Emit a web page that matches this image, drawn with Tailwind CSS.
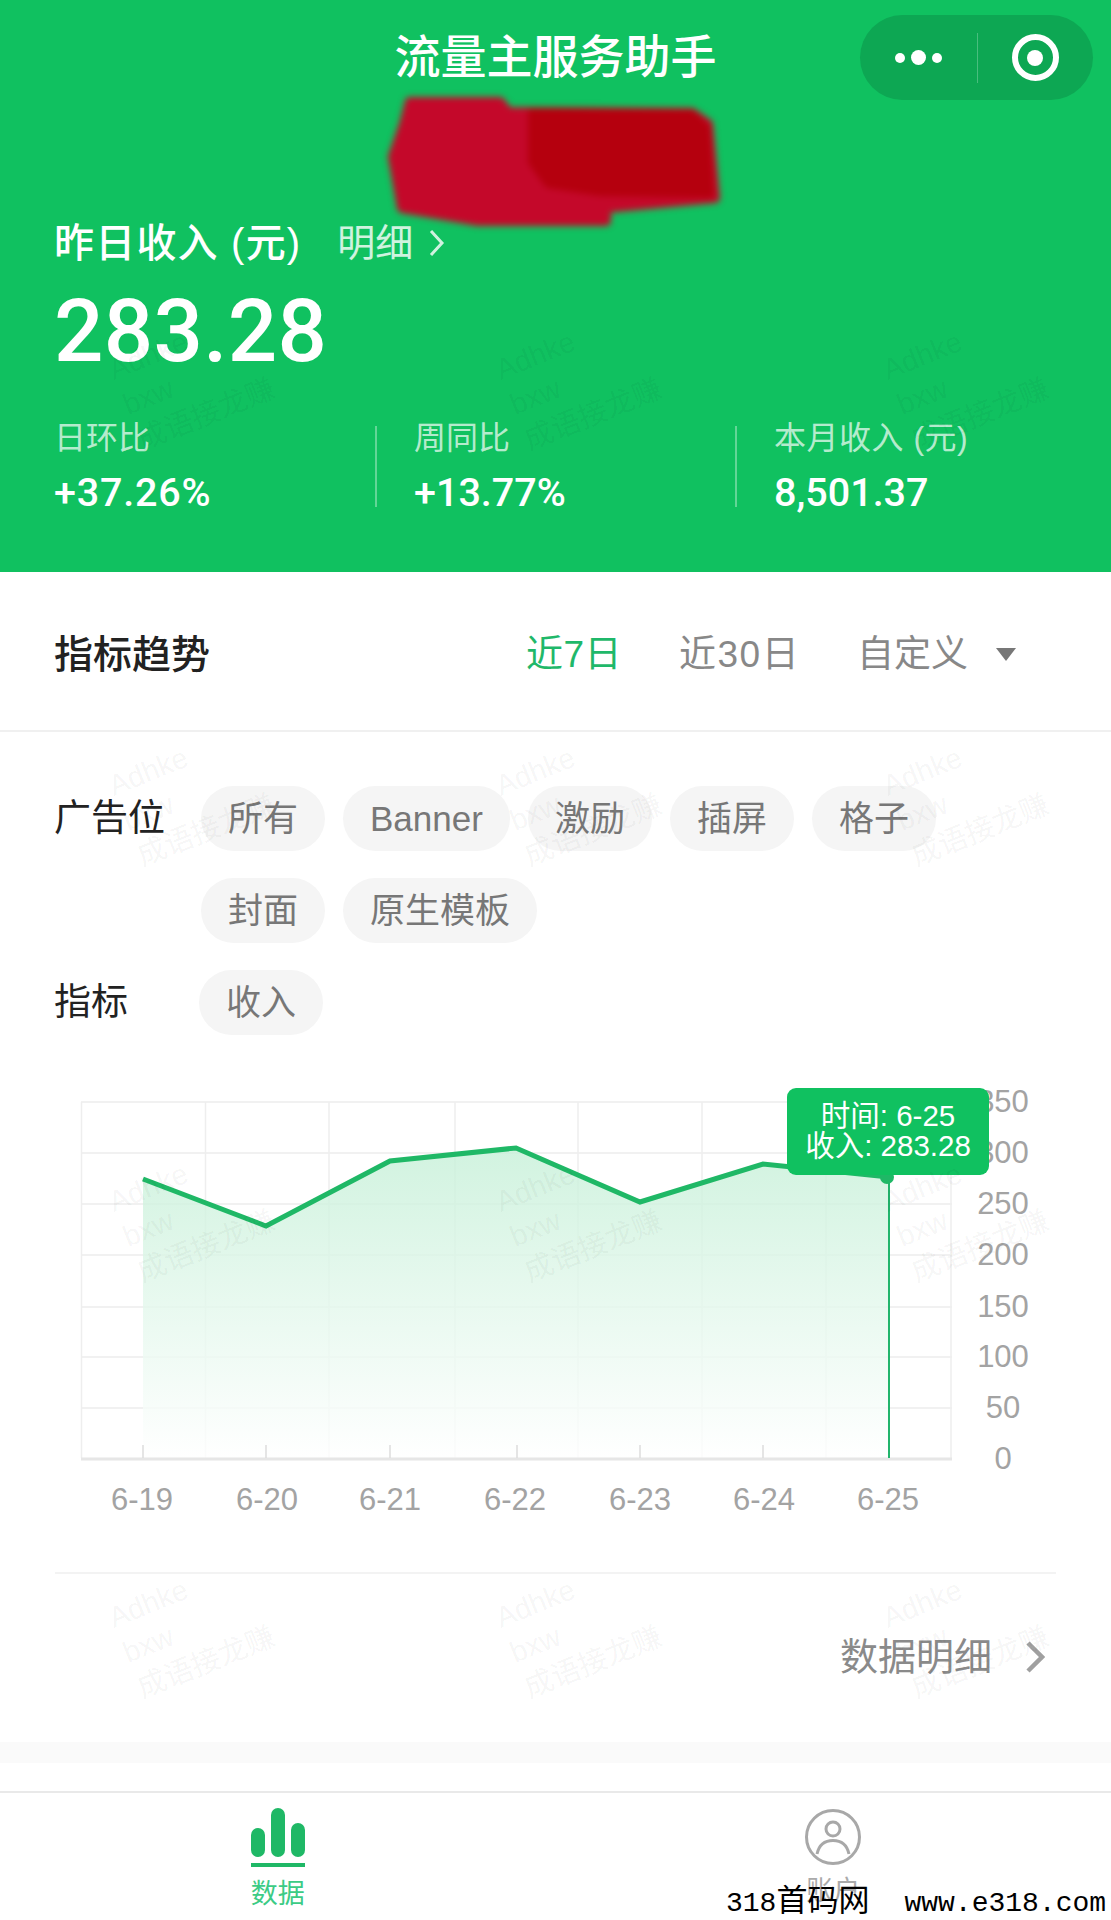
<!DOCTYPE html>
<html lang="zh">
<head>
<meta charset="utf-8">
<title>流量主服务助手</title>
<script src="https://cdn.jsdelivr.net/npm/@tailwindcss/browser@4"></script>
</head>
<body class="bg-white">
<div class="relative w-[1111px] h-[1920px] overflow-hidden bg-white font-['Liberation_Sans','Noto_Sans_CJK_SC',sans-serif]">

  <header class="relative h-[572px] bg-[#10c160] text-white pl-[54px] pr-[55px] pt-[15px]">
    <div class="grid grid-cols-[1fr_auto_1fr] items-center h-[85px] -ml-[36px] -mr-[37px]">
      <div></div>
      <h1 class="text-[46px] leading-none font-medium -mt-[2px]">流量主服务助手</h1>
      <div class="justify-self-end w-[233px] h-[85px] rounded-full bg-[#0da753] flex items-center">
        <div class="flex-1 flex items-center justify-center gap-[6px] pl-[1px]">
          <span class="size-[10px] rounded-full bg-white"></span>
          <span class="size-[15px] rounded-full bg-white"></span>
          <span class="size-[10px] rounded-full bg-white"></span>
        </div>
        <div class="w-px h-[50px] bg-white/25"></div>
        <div class="flex-1 flex items-center justify-center">
          <div class="size-[47px] rounded-full border-[6px] border-white flex items-center justify-center">
            <span class="size-[16px] rounded-full bg-white"></span>
          </div>
        </div>
      </div>
    </div>

    <svg class="absolute left-[375px] top-[85px] blur-[3px]" width="360" height="155" viewBox="375 85 360 155" aria-hidden="true">
      <path d="M410 102L500 102L508 112L692 113L708 124L715 198L606 208L606 221L478 221L402 208L393 157L404 125Z" fill="#c4082a" stroke="#c4082a" stroke-width="10" stroke-linejoin="round"/>
      <path d="M532 112L692 114L706 128L710 194L600 192L548 184L532 162Z" fill="#b5000e" stroke="#b5000e" stroke-width="8" stroke-linejoin="round"/>
    </svg>

    <div class="mt-[118px] flex items-center h-[50px] text-[38px] leading-none">
      <span class="font-medium text-[40px] tracking-[1.2px]">昨日收入 (元)</span>
      <span class="ml-[36px] text-white/80">明细</span>
      <svg class="ml-[16px]" width="16" height="28" viewBox="0 0 16 28" fill="none" stroke="currentColor" stroke-width="3" opacity="0.8"><path d="M2 2L13 14L2 26"/></svg>
    </div>
    <div class="mt-[21px] font-['Roboto',sans-serif] text-[87px] leading-[84px] tracking-[0.3px] font-medium">283.28</div>
    <div class="mt-[53px] flex">
      <div class="w-[321px] h-[81px]">
        <div class="-mt-[8px] text-[32px] leading-[40px] text-white/70">日环比</div>
        <div class="mt-[15px] font-['Roboto',sans-serif] text-[39.5px] leading-[40px] font-medium tracking-[0.8px]">+37.26%</div>
      </div>
      <div class="w-[39px] h-[81px] border-l-2 border-white/35"></div>
      <div class="w-[321px] h-[81px]">
        <div class="-mt-[8px] text-[32px] leading-[40px] text-white/70">周同比</div>
        <div class="mt-[15px] font-['Roboto',sans-serif] text-[39.5px] leading-[40px] font-medium">+13.77%</div>
      </div>
      <div class="w-[39px] h-[81px] border-l-2 border-white/35"></div>
      <div class="h-[81px]">
        <div class="-mt-[8px] text-[32px] leading-[40px] text-white/70 tracking-[0.5px]">本月收入 (元)</div>
        <div class="mt-[15px] font-['Roboto',sans-serif] text-[39.5px] leading-[40px] font-medium">8,501.37</div>
      </div>
    </div>
  </header>

  <section class="h-[161px] flex items-center pl-[54px] pt-[7px] border-b-2 border-[#f0f0f0] -mt-px">
    <h2 class="text-[39px] leading-none font-medium text-[#222]">指标趋势</h2>
    <div class="ml-auto flex items-center text-[37px] leading-none text-[#888] pr-[143px]">
      <span class="text-[#1fb86a] w-[153px] tracking-[0.5px]">近7日</span>
      <span class="w-[178px] tracking-[1.5px]">近30日</span>
      <span>自定义</span>
    </div>
    <span class="absolute left-[996px] top-[648px] w-0 h-0 border-x-[10px] border-x-transparent border-t-[13px] border-t-[#777]"></span>
  </section>

  <section class="pl-[54px] pt-[54px] text-[35px] leading-none">
    <div class="flex">
      <div class="w-[147px] h-[65px] flex items-center text-[#222] text-[37px]">广告位</div>
      <div class="w-[760px] flex flex-wrap gap-x-[18px] gap-y-[27px] text-[#777]">
        <span class="h-[65px] px-[27px] rounded-full bg-[#f5f5f5] flex items-center">所有</span>
        <span class="h-[65px] px-[27px] rounded-full bg-[#f5f5f5] flex items-center">Banner</span>
        <span class="h-[65px] px-[27px] rounded-full bg-[#f5f5f5] flex items-center">激励</span>
        <span class="h-[65px] px-[27px] rounded-full bg-[#f5f5f5] flex items-center">插屏</span>
        <span class="h-[65px] px-[27px] rounded-full bg-[#f5f5f5] flex items-center">格子</span>
        <span class="h-[65px] px-[27px] rounded-full bg-[#f5f5f5] flex items-center">封面</span>
        <span class="h-[65px] px-[27px] rounded-full bg-[#f5f5f5] flex items-center">原生模板</span>
      </div>
    </div>
    <div class="flex mt-[27px]">
      <div class="w-[145px] h-[65px] flex items-center text-[#222] text-[37px]">指标</div>
      <span class="h-[65px] px-[27px] rounded-full bg-[#f5f5f5] flex items-center text-[#777]">收入</span>
    </div>
  </section>

  <svg class="block mt-[25px]" width="1111" height="500" viewBox="0 1060 1111 500" font-size="31" fill="#a3a3a3">
    <defs>
      <linearGradient id="area" x1="0" y1="0" x2="0" y2="1">
        <stop offset="0" stop-color="#c6f0d8"/>
        <stop offset="1" stop-color="#ffffff"/>
      </linearGradient>
    </defs>
    <g stroke="#f1f1f1" stroke-width="2" fill="none">
      <path d="M81 1102H952M81 1153H952M81 1204H952M81 1255H952M81 1307H952M81 1357H952M81 1408H952"/>
      <path stroke-width="1.5" stroke="#eeeeee" d="M81.5 1102V1458M205.5 1102V1458M329 1102V1458M455 1102V1458M578 1102V1458M702 1102V1458M826 1102V1458M951 1102V1458"/>
    </g>
    <path d="M143 1179L266 1226L390 1161L516 1148L640 1202L763 1164L889 1177V1458H143Z" fill="url(#area)" opacity="0.8"/>
    <path d="M81 1459H952" stroke="#e6e6e6" stroke-width="3"/>
    <path d="M143 1445V1458M266 1445V1458M390 1445V1458M517 1445V1458M640 1445V1458M763 1445V1458" stroke="#dddddd" stroke-width="1.5"/>
    <path d="M143 1179L266 1226L390 1161L516 1148L640 1202L763 1164L889 1177" fill="none" stroke="#1fb866" stroke-width="5"/>
    <path d="M889 1177V1458" stroke="#22b56c" stroke-width="2"/>
    <circle cx="887" cy="1177" r="7" fill="#1fb866"/>
    <g text-anchor="middle">
      <text x="1003" y="1112">350</text><text x="1003" y="1163">300</text><text x="1003" y="1214">250</text><text x="1003" y="1265">200</text><text x="1003" y="1317">150</text><text x="1003" y="1367">100</text><text x="1003" y="1418">50</text><text x="1003" y="1469">0</text>
      <text x="142" y="1510">6-19</text><text x="267" y="1510">6-20</text><text x="390" y="1510">6-21</text><text x="515" y="1510">6-22</text><text x="640" y="1510">6-23</text><text x="764" y="1510">6-24</text><text x="888" y="1510">6-25</text>
    </g>
    <rect x="787" y="1088" width="202" height="87" rx="9" fill="#10c160"/>
    <g text-anchor="middle" fill="#ffffff" font-size="29.5">
      <text x="888" y="1126">时间: 6-25</text>
      <text x="888" y="1156">收入: 283.28</text>
    </g>
  </svg>

  <section class="mx-[55px] mt-[12px] border-t-2 border-[#f3f3f3] h-[170px] flex items-center justify-end pr-[11px] pb-[3px] text-[#8a8a8a]">
    <span class="text-[38px] leading-none">数据明细</span>
    <svg class="ml-[33px]" width="20" height="32" viewBox="0 0 20 32" fill="none" stroke="#a0a0a0" stroke-width="4.5"><path d="M3 2L17 16L3 30"/></svg>
  </section>
  <div class="h-[21px] bg-[#fafafa]"></div>

  <nav class="absolute left-0 right-0 top-[1791px] h-[129px] border-t-2 border-[#e9e9e9] grid grid-cols-2">
    <div class="flex flex-col items-center pt-[15px]">
      <svg width="54" height="60" viewBox="0 0 54 60" fill="#1fb866">
        <rect x="0" y="20" width="14" height="29" rx="7"/>
        <rect x="20" y="0" width="14" height="49" rx="7"/>
        <rect x="40" y="15" width="14" height="34" rx="7"/>
        <rect x="0" y="55" width="54" height="4"/>
      </svg>
      <span class="mt-[13px] text-[27px] leading-none text-[#3ccb85]">数据</span>
    </div>
    <div class="flex flex-col items-center pt-[16px]">
      <svg width="56" height="56" viewBox="0 0 56 56" fill="none" stroke="#a8a8a8" stroke-width="3">
        <circle cx="28" cy="28" r="26.5"/>
        <circle cx="28" cy="20" r="7"/>
        <path d="M12 45C14 36 20 31.5 28 31.5C36 31.5 42 36 44 45"/>
      </svg>
      <span class="mt-[13px] text-[27px] leading-none text-[#aaaaaa]">账户</span>
    </div>
  </nav>

  <div class="absolute left-[726px] top-[1887px] w-[385px] whitespace-nowrap font-['Liberation_Mono','Noto_Sans_CJK_SC',monospace] text-[28px] leading-[32px] text-black">318<span class="text-[31px]">首码网</span><span class="ml-[35px]">www.e318.com</span></div>

  <div class="absolute inset-0 pointer-events-none pl-[103px] pt-[353px] grid grid-cols-[repeat(3,387px)] grid-rows-[repeat(4,416px)] text-[29px] leading-[38px] text-black/[0.05]" aria-hidden="true">
    <div class="-rotate-[22deg] origin-top-left"><div>Adhke</div><div>bxw</div><div>成语接龙赚</div></div>
    <div class="-rotate-[22deg] origin-top-left"><div>Adhke</div><div>bxw</div><div>成语接龙赚</div></div>
    <div class="-rotate-[22deg] origin-top-left"><div>Adhke</div><div>bxw</div><div>成语接龙赚</div></div>
    <div class="-rotate-[22deg] origin-top-left"><div>Adhke</div><div>bxw</div><div>成语接龙赚</div></div>
    <div class="-rotate-[22deg] origin-top-left"><div>Adhke</div><div>bxw</div><div>成语接龙赚</div></div>
    <div class="-rotate-[22deg] origin-top-left"><div>Adhke</div><div>bxw</div><div>成语接龙赚</div></div>
    <div class="-rotate-[22deg] origin-top-left"><div>Adhke</div><div>bxw</div><div>成语接龙赚</div></div>
    <div class="-rotate-[22deg] origin-top-left"><div>Adhke</div><div>bxw</div><div>成语接龙赚</div></div>
    <div class="-rotate-[22deg] origin-top-left"><div>Adhke</div><div>bxw</div><div>成语接龙赚</div></div>
    <div class="-rotate-[22deg] origin-top-left"><div>Adhke</div><div>bxw</div><div>成语接龙赚</div></div>
    <div class="-rotate-[22deg] origin-top-left"><div>Adhke</div><div>bxw</div><div>成语接龙赚</div></div>
    <div class="-rotate-[22deg] origin-top-left"><div>Adhke</div><div>bxw</div><div>成语接龙赚</div></div>
  </div>
</div>
</body>
</html>
